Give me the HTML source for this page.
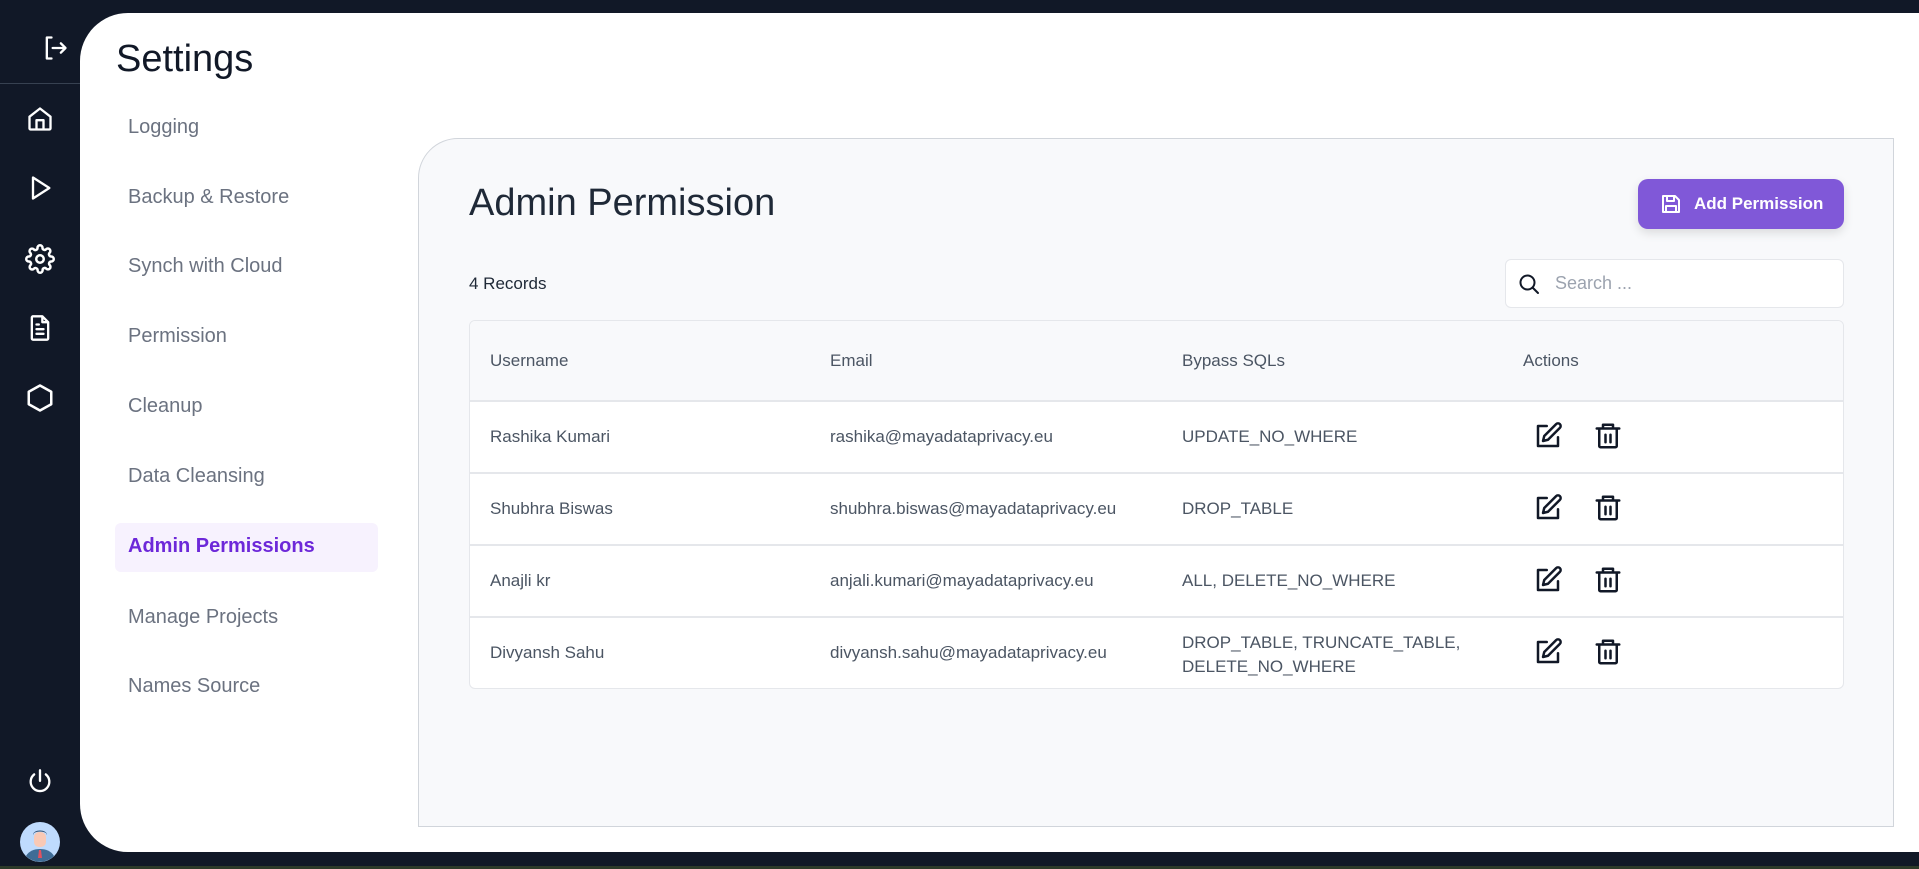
<!DOCTYPE html>
<html><head><style>
*{margin:0;padding:0;box-sizing:border-box}
body{width:1919px;height:869px;background:#111827;font-family:"Liberation Sans",sans-serif;position:relative;overflow:hidden}
.side svg{position:absolute;stroke:#fff;fill:none;stroke-width:2;stroke-linecap:round;stroke-linejoin:round}
.panel{position:absolute;left:80px;top:13px;width:1839px;height:839px;background:#fff;border-radius:48px 0 0 48px}
.a{position:absolute}
.menu{position:absolute;left:128px;font-size:20px;color:#6b7280}
.card{position:absolute;left:418px;top:138px;width:1476px;height:689px;background:#f8f9fb;border:1px solid #d1d5db;border-radius:40px 0 0 0}
.tbl{position:absolute;left:469px;top:320px;width:1375px;height:369px;background:#fff;border:1px solid #e5e7eb;border-radius:6px;overflow:hidden}
.row{position:absolute;left:0;width:100%;border-top:2px solid #e5e7eb;font-size:17px;color:#4b5563}
.row span{position:absolute}
.ic{position:absolute;stroke:#111827;fill:none;stroke-width:2;stroke-linecap:round;stroke-linejoin:round}
</style></head><body>
<div class="side">
<svg style="left:41px;top:34px" width="28" height="28" viewBox="0 0 24 24"><path d="M9 3H5v18h4M10 12h11M17 8l4 4-4 4"/></svg>
<div class="a" style="left:0;top:83px;width:80px;height:1px;background:#374151"></div>
<svg style="left:26px;top:105px" width="28" height="28" viewBox="0 0 24 24"><path d="M3 10l9-7 9 7v10a1 1 0 0 1-1 1H4a1 1 0 0 1-1-1z M9 21v-8h6v8"/></svg>
<svg style="left:26px;top:174px" width="28" height="28" viewBox="0 0 24 24"><path d="M6 3l14 9-14 9z"/></svg>
<svg style="left:25px;top:244px" width="30" height="30" viewBox="0 0 24 24"><circle cx="12" cy="12" r="3"/><path d="M19.4 15a1.65 1.65 0 0 0 .33 1.82l.06.06a2 2 0 1 1-2.83 2.83l-.06-.06a1.65 1.65 0 0 0-1.82-.33 1.65 1.65 0 0 0-1 1.51V21a2 2 0 0 1-4 0v-.09A1.650 1.65 0 0 0 9 19.4a1.65 1.65 0 0 0-1.820.33l-.06.06a2 2 0 1 1-2.83-2.83l.06-.06A1.65 1.65 0 0 0 4.68 15a1.65 1.65 0 0 0-1.51-1H3a2 2 0 0 1 0-4h.09A1.65 1.65 0 0 0 4.6 9a1.65 1.65 0 0 0-.33-1.82l-.06-.06a2 2 0 1 1 2.83-2.83l.06.06A1.65 1.65 0 0 0 9 4.68 1.65 1.65 0 0 0 10 3.17V3a2 2 0 0 1 4 0v.09a1.65 1.65 0 0 0 1 1.51 1.65 1.65 0 0 0 1.82-.33l.06-.06a2 2 0 1 1 2.83 2.83l-.06.06A1.65 1.65 0 0 0 19.4 9a1.65 1.65 0 0 0 1.51 1H21a2 2 0 0 1 0 4h-.09a1.65 1.65 0 0 0-1.51 1z"/></svg>
<svg style="left:26px;top:314px" width="28" height="28" viewBox="0 0 24 24"><path d="M14 2H6a1 1 0 0 0-1 1v18a1 1 0 0 0 1 1h12a1 1 0 0 0 1-1V7z M14 2v5h5 M9 13h6 M9 17h6 M9 9h2"/></svg>
<svg style="left:25px;top:383px" width="30" height="30" viewBox="0 0 24 24"><path d="M12 2l9 5v10l-9 5-9-5V7z"/></svg>
<svg style="left:26px;top:768px" width="28" height="28" viewBox="0 0 24 24"><path d="M12 2v9 M7 5.5a8 8 0 1 0 10 0"/></svg>
<svg style="left:20px;top:822px;stroke:none" width="40" height="40" viewBox="0 0 40 40"><circle cx="20" cy="20" r="20" fill="#bfdbfe"/><path d="M6 34c3-5 8-7 14-7s11 2 14 7a20 20 0 0 1-28 0z" fill="#3f6c96"/><rect x="14" y="10" width="12" height="15" rx="5" fill="#f9c9b6"/><path d="M13 13c0-6 14-6 14 0l-1 -2c-3-2-9-2-12 0z" fill="#2c4a6b"/><path d="M19 28h2l1 8h-4z" fill="#e05260"/></svg>
</div>
<div class="panel"></div>
<div class="a" style="left:116px;top:38px;font-size:38px;color:#111827">Settings</div>
<div class="menu" style="top:116px">Logging</div>
<div class="menu" style="top:186px">Backup &amp; Restore</div>
<div class="menu" style="top:255px">Synch with Cloud</div>
<div class="menu" style="top:325px">Permission</div>
<div class="menu" style="top:395px">Cleanup</div>
<div class="menu" style="top:465px">Data Cleansing</div>
<div class="a" style="left:115px;top:523px;width:263px;height:49px;background:#f7f2fe;border-radius:6px"></div>
<div class="menu" style="top:535px;color:#6d28d9;font-weight:bold">Admin Permissions</div>
<div class="menu" style="top:606px">Manage Projects</div>
<div class="menu" style="top:675px">Names Source</div>

<div class="card"></div>
<div class="a" style="left:469px;top:182px;font-size:38px;color:#1f2937">Admin Permission</div>
<div class="a" style="left:1638px;top:179px;width:206px;height:50px;background:#8058d8;border-radius:10px;box-shadow:0 4px 10px rgba(0,0,0,.12);color:#fff;font-weight:bold;font-size:17px;line-height:50px;padding-left:56px">Add Permission</div>
<svg class="a" style="left:1659px;top:192px" width="24" height="24" viewBox="0 0 24 24" fill="none" stroke="#fff" stroke-width="2" stroke-linejoin="round"><path d="M4 4h12l4 4v12H4z M8 4v5h7V4 M7 20v-6h10v6"/></svg>
<div class="a" style="left:469px;top:274px;font-size:17px;color:#1f2937">4 Records</div>
<div class="a" style="left:1505px;top:259px;width:339px;height:49px;background:#fff;border:1px solid #e5e7eb;border-radius:6px;font-size:18px;color:#9ca3af;line-height:47px;padding-left:49px">Search ...</div>
<svg class="ic" style="left:1517px;top:272px" width="24" height="24" viewBox="0 0 24 24"><circle cx="10.5" cy="10.5" r="7"/><path d="M16 16l5 5"/></svg>

<div class="tbl">
<div class="row" style="top:0;height:79px;border-top:none;background:#f8f9fb;color:#4b5563"><span style="left:20px;top:30px">Username</span><span style="left:360px;top:30px">Email</span><span style="left:712px;top:30px">Bypass SQLs</span><span style="left:1053px;top:30px">Actions</span></div>
<div class="row" style="top:79px;height:72px"><span style="left:20px;top:25px">Rashika Kumari</span><span style="left:360px;top:25px">rashika@mayadataprivacy.eu</span><span style="left:712px;top:25px">UPDATE_NO_WHERE</span></div>
<div class="row" style="top:151px;height:72px"><span style="left:20px;top:25px">Shubhra Biswas</span><span style="left:360px;top:25px">shubhra.biswas@mayadataprivacy.eu</span><span style="left:712px;top:25px">DROP_TABLE</span></div>
<div class="row" style="top:223px;height:72px"><span style="left:20px;top:25px">Anajli kr</span><span style="left:360px;top:25px">anjali.kumari@mayadataprivacy.eu</span><span style="left:712px;top:25px">ALL, DELETE_NO_WHERE</span></div>
<div class="row" style="top:295px;height:74px"><span style="left:20px;top:25px">Divyansh Sahu</span><span style="left:360px;top:25px">divyansh.sahu@mayadataprivacy.eu</span><span style="left:712px;top:13px;line-height:24px">DROP_TABLE, TRUNCATE_TABLE,<br>DELETE_NO_WHERE</span></div>
</div>
<svg width="0" height="0"><defs>
<symbol id="ed" viewBox="0 0 24 24"><path d="M11 4H4v16h16v-7 M18.5 2.5a2.1 2.1 0 0 1 3 3L12 15l-4 1 1-4z" fill="none" stroke="#111827" stroke-width="2" stroke-linecap="round" stroke-linejoin="round"/></symbol>
<symbol id="tr" viewBox="0 0 24 24"><path d="M3 6h18 M5 6v14a1 1 0 0 0 1 1h12a1 1 0 0 0 1-1V6 M8 6V3h8v3 M10 11v6 M14 11v6" fill="none" stroke="#111827" stroke-width="2" stroke-linecap="round" stroke-linejoin="round"/></symbol>
</defs></svg>
<svg class="a" style="left:1533px;top:421px" width="30" height="30"><use href="#ed"/></svg>
<svg class="a" style="left:1593px;top:421px" width="30" height="30"><use href="#tr"/></svg>
<svg class="a" style="left:1533px;top:493px" width="30" height="30"><use href="#ed"/></svg>
<svg class="a" style="left:1593px;top:493px" width="30" height="30"><use href="#tr"/></svg>
<svg class="a" style="left:1533px;top:565px" width="30" height="30"><use href="#ed"/></svg>
<svg class="a" style="left:1593px;top:565px" width="30" height="30"><use href="#tr"/></svg>
<svg class="a" style="left:1533px;top:637px" width="30" height="30"><use href="#ed"/></svg>
<svg class="a" style="left:1593px;top:637px" width="30" height="30"><use href="#tr"/></svg>
<div class="a" style="left:0;top:866px;width:1919px;height:3px;background:#2d3a2a"></div>
</body></html>
